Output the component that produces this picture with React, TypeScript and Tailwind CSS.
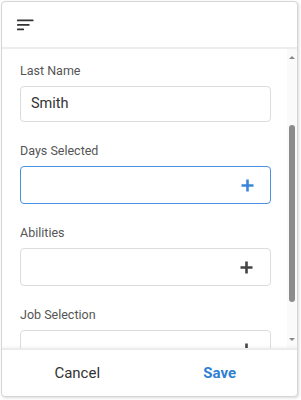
import React from 'react';

function PlusIcon({ color }: { color: string }) {
  return (
    <svg width="15" height="15" viewBox="0 0 15 15" fill="none">
      <path d="M7.5 1.5v12M1.5 7.5h12" stroke={color} strokeWidth="2.6" strokeLinecap="butt" />
    </svg>
  );
}

function SortIcon() {
  return (
    <svg width="17" height="12" viewBox="0 0 17 12" fill="#333">
      <rect x="0" y="0.5" width="16.5" height="1.8" rx="0.4" />
      <rect x="0" y="5" width="12.5" height="1.8" rx="0.4" />
      <rect x="0" y="9.5" width="7" height="1.8" rx="0.4" />
    </svg>
  );
}

function Field({ label, children }: { label: string; children: React.ReactNode }) {
  return (
    <div className="flex flex-col">
      <div className="h-4 text-[12.5px] leading-4 text-[#555] mb-[7px]">{label}</div>
      {children}
    </div>
  );
}

function PickerBox({ focused }: { focused?: boolean }) {
  return (
    <div
      className={
        focused
          ? 'h-[38px] rounded-[4px] border-[1.5px] border-[#4a90e2] flex items-center justify-end pr-[15px] shrink-0'
          : 'h-[38px] rounded-[4px] border border-[#dcdcdc] flex items-center justify-end pr-[16px] shrink-0'
      }
    >
      <PlusIcon color={focused ? '#3b86d8' : '#444'} />
    </div>
  );
}

export default function App() {
  return (
    <div className="w-[301px] h-[400px] bg-white pl-[1px] pt-[1px] pr-[3px] pb-[3px] font-['Roboto',sans-serif]">
      <div className="w-full h-full flex flex-col rounded-[4px] border border-[#d6d6d6] shadow-[1px_1px_3px_rgba(0,0,0,0.15)] bg-white overflow-hidden">
        {/* Header */}
        <div className="h-[47px] shrink-0 flex items-center pl-[15px] border-b-2 border-[#ececec]">
          <SortIcon />
        </div>

        {/* Scroll area */}
        <div className="flex-1 flex min-h-0">
          <div className="flex-1 overflow-hidden pl-[18px] pr-[16px] pt-[14px] flex flex-col gap-[21px]">
            <Field label="Last Name">
              <div className="h-[36px] rounded-[4px] border border-[#dcdcdc] flex items-center pl-[10px] text-[14.5px] text-[#333] shrink-0">
                Smith
              </div>
            </Field>
            <Field label="Days Selected">
              <PickerBox focused />
            </Field>
            <Field label="Abilities">
              <PickerBox />
            </Field>
            <Field label="Job Selection">
              <PickerBox />
            </Field>
          </div>

          {/* Scrollbar */}
          <div className="w-[10px] shrink-0 bg-[#fafafa] flex flex-col items-center py-[7px]">
            <div className="w-0 h-0 border-l-[3px] border-r-[3px] border-b-[3px] border-l-transparent border-r-transparent border-b-[#888]" />
            <div className="flex-1 w-full flex flex-col items-center pt-[66px] pb-[36px]">
              <div className="w-[6px] flex-1 rounded-full bg-[#8c8c8c]" />
            </div>
            <div className="w-0 h-0 border-l-[3px] border-r-[3px] border-t-[3px] border-l-transparent border-r-transparent border-t-[#888]" />
          </div>
        </div>

        {/* Footer */}
        <div className="h-[48px] shrink-0 flex border-t-2 border-[#ececec] shadow-[0_-1px_3px_rgba(0,0,0,0.05)]">
          <button className="flex-1 flex items-center justify-center text-[15px] text-[#333] pl-[4px]">Cancel</button>
          <button className="flex-1 flex items-center justify-center text-[15px] font-bold text-[#2f7fd4] pr-[6px]">
            Save
          </button>
        </div>
      </div>
    </div>
  );
}
